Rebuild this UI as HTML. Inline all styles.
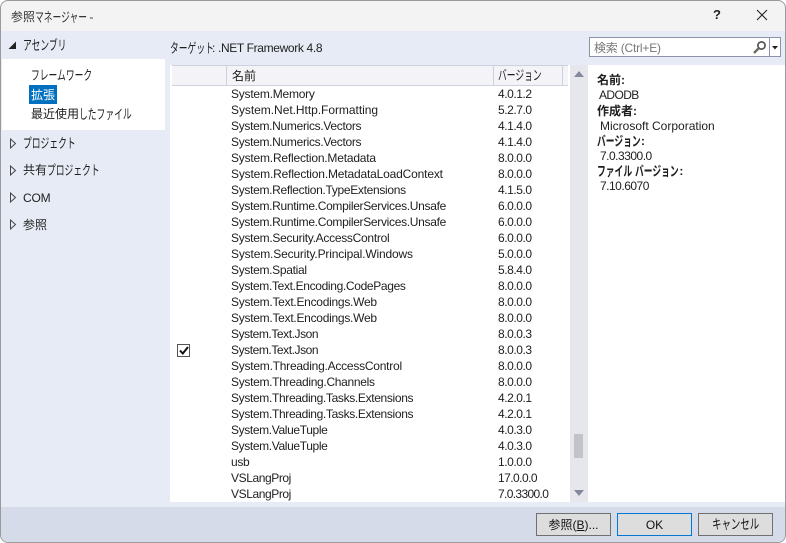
<!DOCTYPE html>
<html lang="ja"><head><meta charset="utf-8"><style>
html,body{margin:0;padding:0;width:786px;height:543px;overflow:hidden;background:#fff}
body{font:12px "Liberation Sans","Noto Sans CJK JP",sans-serif;color:#1e1e1e;position:relative}
.a{position:absolute;white-space:nowrap;line-height:16px}
.b{position:absolute}
.k{display:inline-block;position:relative;top:1px;font-size:13.5px;line-height:16px;height:16px;vertical-align:top;transform:scaleX(.65);transform-origin:0 50%;white-space:nowrap}
.n{position:absolute;left:231px;white-space:nowrap;line-height:16px;letter-spacing:-.31px}
.v{position:absolute;left:498px;white-space:nowrap;line-height:16px;letter-spacing:-.45px}
.btn{position:absolute;top:513px;width:73px;height:21px;background:#dddddd;border:1px solid #707070;text-align:center;line-height:22px;color:#111}
b{font-weight:bold}
</style></head><body>
<div class="b" style="left:0;top:0;width:784px;height:541px;background:#f3f3f3;border:1px solid #9a9a9a;border-radius:8px;overflow:hidden">
 <div class="b" style="left:0;top:30px;width:784px;height:476px;background:#e6ebf5"></div>
 <div class="b" style="left:0;top:506px;width:784px;height:35px;background:#d6dbe9"></div>
</div>
<div class="a" style="left:11px;top:9px;color:#333">参照<span class="k" style="width:51px">マネージャー</span> -</div>
<div class="a" style="left:713px;top:7px;font-size:13px;font-weight:bold;color:#222">?</div>
<svg class="b" style="left:756px;top:9px" width="12" height="12"><path d="M1 1L11 11M11 1L1 11" stroke="#222" stroke-width="1.1" fill="none"/></svg>

<svg class="b" style="left:8px;top:41px" width="9" height="9"><path d="M8 .5V8H.5Z" fill="#222"/></svg>
<div class="a" style="left:23px;top:37px"><span class="k" style="width:45px">アセンブリ</span></div>
<div class="b" style="left:2px;top:59px;width:163px;height:71px;background:#fff"></div>
<div class="a" style="left:31px;top:67px"><span class="k" style="width:60px">フレームワーク</span></div>
<div class="b" style="left:29px;top:85px;width:28px;height:19px;background:#0070c0"></div>
<div class="a" style="left:31px;top:87px;color:#fff">拡張</div>
<div class="a" style="left:31px;top:106px">最近使用<span class="k" style="width:52px">したファイル</span></div>
<svg class="b" style="left:9px;top:138px" width="8" height="11"><path d="M1.5 1L6.5 5.5L1.5 10Z" fill="#e6ebf5" stroke="#444"/></svg>
<div class="a" style="left:23px;top:135px"><span class="k" style="width:52px">プロジェクト</span></div>
<svg class="b" style="left:9px;top:165px" width="8" height="11"><path d="M1.5 1L6.5 5.5L1.5 10Z" fill="#e6ebf5" stroke="#444"/></svg>
<div class="a" style="left:23px;top:162px">共有<span class="k" style="width:52px">プロジェクト</span></div>
<svg class="b" style="left:9px;top:192px" width="8" height="11"><path d="M1.5 1L6.5 5.5L1.5 10Z" fill="#e6ebf5" stroke="#444"/></svg>
<div class="a" style="left:23px;top:190px;letter-spacing:-.2px">COM</div>
<svg class="b" style="left:9px;top:219px" width="8" height="11"><path d="M1.5 1L6.5 5.5L1.5 10Z" fill="#e6ebf5" stroke="#444"/></svg>
<div class="a" style="left:23px;top:217px">参照</div>

<div class="a" style="left:170px;top:40px;letter-spacing:-.35px"><span class="k" style="width:42px;letter-spacing:0">ターゲット</span>: .NET Framework 4.8</div>
<div class="b" style="left:589px;top:37px;width:190px;height:18px;background:#fff;border:1px solid #8a93a8"></div>
<div class="a" style="left:594px;top:40px;color:#777;letter-spacing:-.2px">検索 (Ctrl+E)</div>
<div class="b" style="left:769px;top:38px;width:1px;height:18px;background:#8a93a8"></div>
<svg class="b" style="left:752px;top:40px" width="15" height="15"><circle cx="9.5" cy="5.5" r="3.6" fill="none" stroke="#555" stroke-width="1.7"/><path d="M6.8 8.2L2 13" stroke="#6a6a5e" stroke-width="2.4"/></svg>
<svg class="b" style="left:772px;top:46px" width="6" height="4"><path d="M0 0H6L3 3.5Z" fill="#222"/></svg>

<div class="b" style="left:170px;top:65px;width:400px;height:437px;background:#fff"></div>
<div class="b" style="left:172px;top:65px;width:396px;height:19px;background:#f4f4f8;border-top:1px solid #ccd0df;border-bottom:1px solid #ccd0df"></div>
<div class="b" style="left:226px;top:66px;width:1px;height:19px;background:#ccd0df"></div>
<div class="b" style="left:493px;top:66px;width:1px;height:19px;background:#ccd0df"></div>
<div class="b" style="left:562px;top:66px;width:1px;height:19px;background:#ccd0df"></div>
<div class="a" style="left:232px;top:68px">名前</div>
<div class="a" style="left:498px;top:67px"><span class="k" style="width:44px">バージョン</span></div>

<div class="b" style="left:570px;top:65px;width:18px;height:437px;background:#e6e7ed"></div>
<svg class="b" style="left:574px;top:71px" width="10" height="6"><path d="M0 6L5 0L10 6Z" fill="#868999"/></svg>
<svg class="b" style="left:574px;top:490px" width="10" height="6"><path d="M0 0L5 6L10 0Z" fill="#868999"/></svg>
<div class="b" style="left:574px;top:434px;width:9px;height:24px;background:#c2c3c9"></div>
<div class="b" style="left:588px;top:65px;width:198px;height:437px;background:#fff"></div>
<div class="b" style="left:785px;top:65px;width:1px;height:437px;background:#9a9a9a"></div>

<div class="a" style="left:597px;top:72px"><b>名前:</b></div>
<div class="a" style="left:599px;top:87px;letter-spacing:-.6px">ADODB</div>
<div class="a" style="left:597px;top:103px"><b>作成者:</b></div>
<div class="a" style="left:600px;top:118px">Microsoft Corporation</div>
<div class="a" style="left:597px;top:133px"><b><span class="k" style="width:44px">バージョン</span>:</b></div>
<div class="a" style="left:600px;top:148px;letter-spacing:-.5px">7.0.3300.0</div>
<div class="a" style="left:597px;top:163px"><b><span class="k" style="width:35px">ファイル</span> <span class="k" style="width:44px">バージョン</span>:</b></div>
<div class="a" style="left:600px;top:178px;letter-spacing:-.5px">7.10.6070</div>

<div class="n" style="top:86px;letter-spacing:-.23px">System.Memory</div><div class="v" style="top:86px">4.0.1.2</div>
<div class="n" style="top:102px;letter-spacing:-.04px">System.Net.Http.Formatting</div><div class="v" style="top:102px">5.2.7.0</div>
<div class="n" style="top:118px">System.Numerics.Vectors</div><div class="v" style="top:118px">4.1.4.0</div>
<div class="n" style="top:134px">System.Numerics.Vectors</div><div class="v" style="top:134px">4.1.4.0</div>
<div class="n" style="top:150px;letter-spacing:-.2px">System.Reflection.Metadata</div><div class="v" style="top:150px">8.0.0.0</div>
<div class="n" style="top:166px;letter-spacing:-.17px">System.Reflection.MetadataLoadContext</div><div class="v" style="top:166px">8.0.0.0</div>
<div class="n" style="top:182px">System.Reflection.TypeExtensions</div><div class="v" style="top:182px">4.1.5.0</div>
<div class="n" style="top:198px">System.Runtime.CompilerServices.Unsafe</div><div class="v" style="top:198px">6.0.0.0</div>
<div class="n" style="top:214px">System.Runtime.CompilerServices.Unsafe</div><div class="v" style="top:214px">6.0.0.0</div>
<div class="n" style="top:230px;letter-spacing:-.28px">System.Security.AccessControl</div><div class="v" style="top:230px">6.0.0.0</div>
<div class="n" style="top:246px;letter-spacing:-.16px">System.Security.Principal.Windows</div><div class="v" style="top:246px">5.0.0.0</div>
<div class="n" style="top:262px">System.Spatial</div><div class="v" style="top:262px">5.8.4.0</div>
<div class="n" style="top:278px;letter-spacing:-.34px">System.Text.Encoding.CodePages</div><div class="v" style="top:278px">8.0.0.0</div>
<div class="n" style="top:294px;letter-spacing:-.27px">System.Text.Encodings.Web</div><div class="v" style="top:294px">8.0.0.0</div>
<div class="n" style="top:310px;letter-spacing:-.27px">System.Text.Encodings.Web</div><div class="v" style="top:310px">8.0.0.0</div>
<div class="n" style="top:326px;letter-spacing:-.43px">System.Text.Json</div><div class="v" style="top:326px">8.0.0.3</div>
<div class="n" style="top:342px;letter-spacing:-.43px">System.Text.Json</div><div class="v" style="top:342px">8.0.0.3</div>
<div class="n" style="top:358px;letter-spacing:-.24px">System.Threading.AccessControl</div><div class="v" style="top:358px">8.0.0.0</div>
<div class="n" style="top:374px">System.Threading.Channels</div><div class="v" style="top:374px">8.0.0.0</div>
<div class="n" style="top:390px;letter-spacing:-.34px">System.Threading.Tasks.Extensions</div><div class="v" style="top:390px">4.2.0.1</div>
<div class="n" style="top:406px;letter-spacing:-.34px">System.Threading.Tasks.Extensions</div><div class="v" style="top:406px">4.2.0.1</div>
<div class="n" style="top:422px;letter-spacing:-.37px">System.ValueTuple</div><div class="v" style="top:422px">4.0.3.0</div>
<div class="n" style="top:438px;letter-spacing:-.37px">System.ValueTuple</div><div class="v" style="top:438px">4.0.3.0</div>
<div class="n" style="top:454px">usb</div><div class="v" style="top:454px">1.0.0.0</div>
<div class="n" style="top:470px;letter-spacing:-.41px">VSLangProj</div><div class="v" style="top:470px;letter-spacing:-.55px">17.0.0.0</div>
<div class="n" style="top:486px;letter-spacing:-.41px">VSLangProj</div><div class="v" style="top:486px;letter-spacing:-.65px">7.0.3300.0</div>

<div class="b" style="left:177px;top:344px;width:11px;height:11px;background:#fff;border:1px solid #555"></div>
<svg class="b" style="left:178px;top:344px" width="12" height="12"><path d="M2 6.5L4.8 9.5L10 3" stroke="#111" stroke-width="2" fill="none"/></svg>

<div class="btn" style="left:536px">参照(<u>B</u>)...</div>
<div class="btn" style="left:617px;border:1px solid #0078d4">OK</div>
<div class="btn" style="left:698px"><span class="k" style="width:47px;top:3px;transform:scaleX(.7)">キャンセル</span></div>
</body></html>
